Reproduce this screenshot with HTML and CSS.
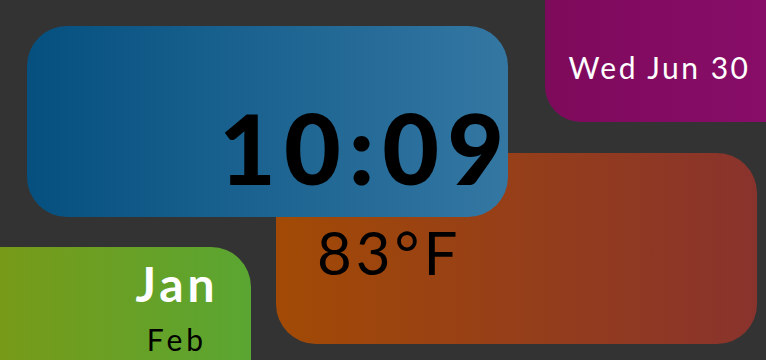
FILE: index.html
```html
<!DOCTYPE html>
<html lang="en">
<head>
  <meta charset="UTF-8">
  <meta name="viewport" content="width=device-width, initial-scale=1.0">
  <title>Tiles</title>
  <link rel="stylesheet" href="styles.css">
</head>
<body>

<div class="board">
  <div class="tile tile-date">
    <span class="date-text">Wed Jun 30</span>
  </div>

  <div class="tile tile-weather">
    <span class="temp">83°F</span>
  </div>

  <div class="tile tile-clock">
    <span class="time">10:09</span>
  </div>

  <div class="tile tile-months">
    <div class="month-list">
      <span class="month current">Jan</span>
      <span class="month">Feb</span>
    </div>
  </div>
</div>

</body>
</html>
```

FILE: styles.css
```css
body {
  margin: 0;
  padding: 0;
  background-color: #333333;
  font-family: Lato, "Open Sans", sans-serif;
  overflow: hidden;
}
.board {
  position: relative;
  width: 766px;
  height: 360px;
  overflow: hidden;
}
/* tiles sit on a free canvas and overlap each other */
.tile {
  position: absolute;
  box-sizing: border-box;
  display: flex;
}
.tile-date {
  left: 545px;
  top: 0;
  right: 0;
  height: 122px;
  border-radius: 0 0 0 36px;
  background: linear-gradient(to right, #7e0a5b, #870d68);
  justify-content: flex-end;
  padding: 52px 18px 0 0;
}
.date-text {
  color: #fff;
  font-size: 30px;
  line-height: 1;
  letter-spacing: 2.5px;
  margin-right: -2.5px;
}
.tile-clock {
  left: 27px;
  top: 26px;
  width: 481px;
  height: 191px;
  border-radius: 40px;
  background: linear-gradient(to right, #05507f, #3477a3);
  justify-content: flex-end;
  padding: 72px 4px 0 0;
}
.time {
  color: #000;
  font-size: 98px;
  font-weight: 900;
  line-height: 1;
  letter-spacing: 8px;
  margin-right: -8px;
}
.tile-weather {
  left: 276px;
  top: 153px;
  width: 481px;
  height: 191px;
  border-radius: 40px;
  background: linear-gradient(to right, #a24a05, #89332d);
  padding: 69px 0 0 41px;
}
.temp {
  color: #000;
  font-size: 60px;
  font-weight: 400;
  line-height: 1;
  letter-spacing: 4px;
}
.tile-months {
  left: 0;
  top: 247px;
  width: 251px;
  height: 150px;
  border-radius: 0 40px 0 0;
  background: linear-gradient(to right, #779a18, #5aa632);
  padding-top: 13px;
}
.month-list {
  margin-left: 125px;
  width: 100px;
  display: flex;
  flex-direction: column;
  align-items: center;
  gap: 16px;
}
.month {
  color: #000;
  font-size: 30px;
  line-height: 1;
  letter-spacing: 4px;
  margin-right: -4px;
}
.month.current {
  color: #fff;
  font-size: 48px;
  font-weight: 700;
}
```
